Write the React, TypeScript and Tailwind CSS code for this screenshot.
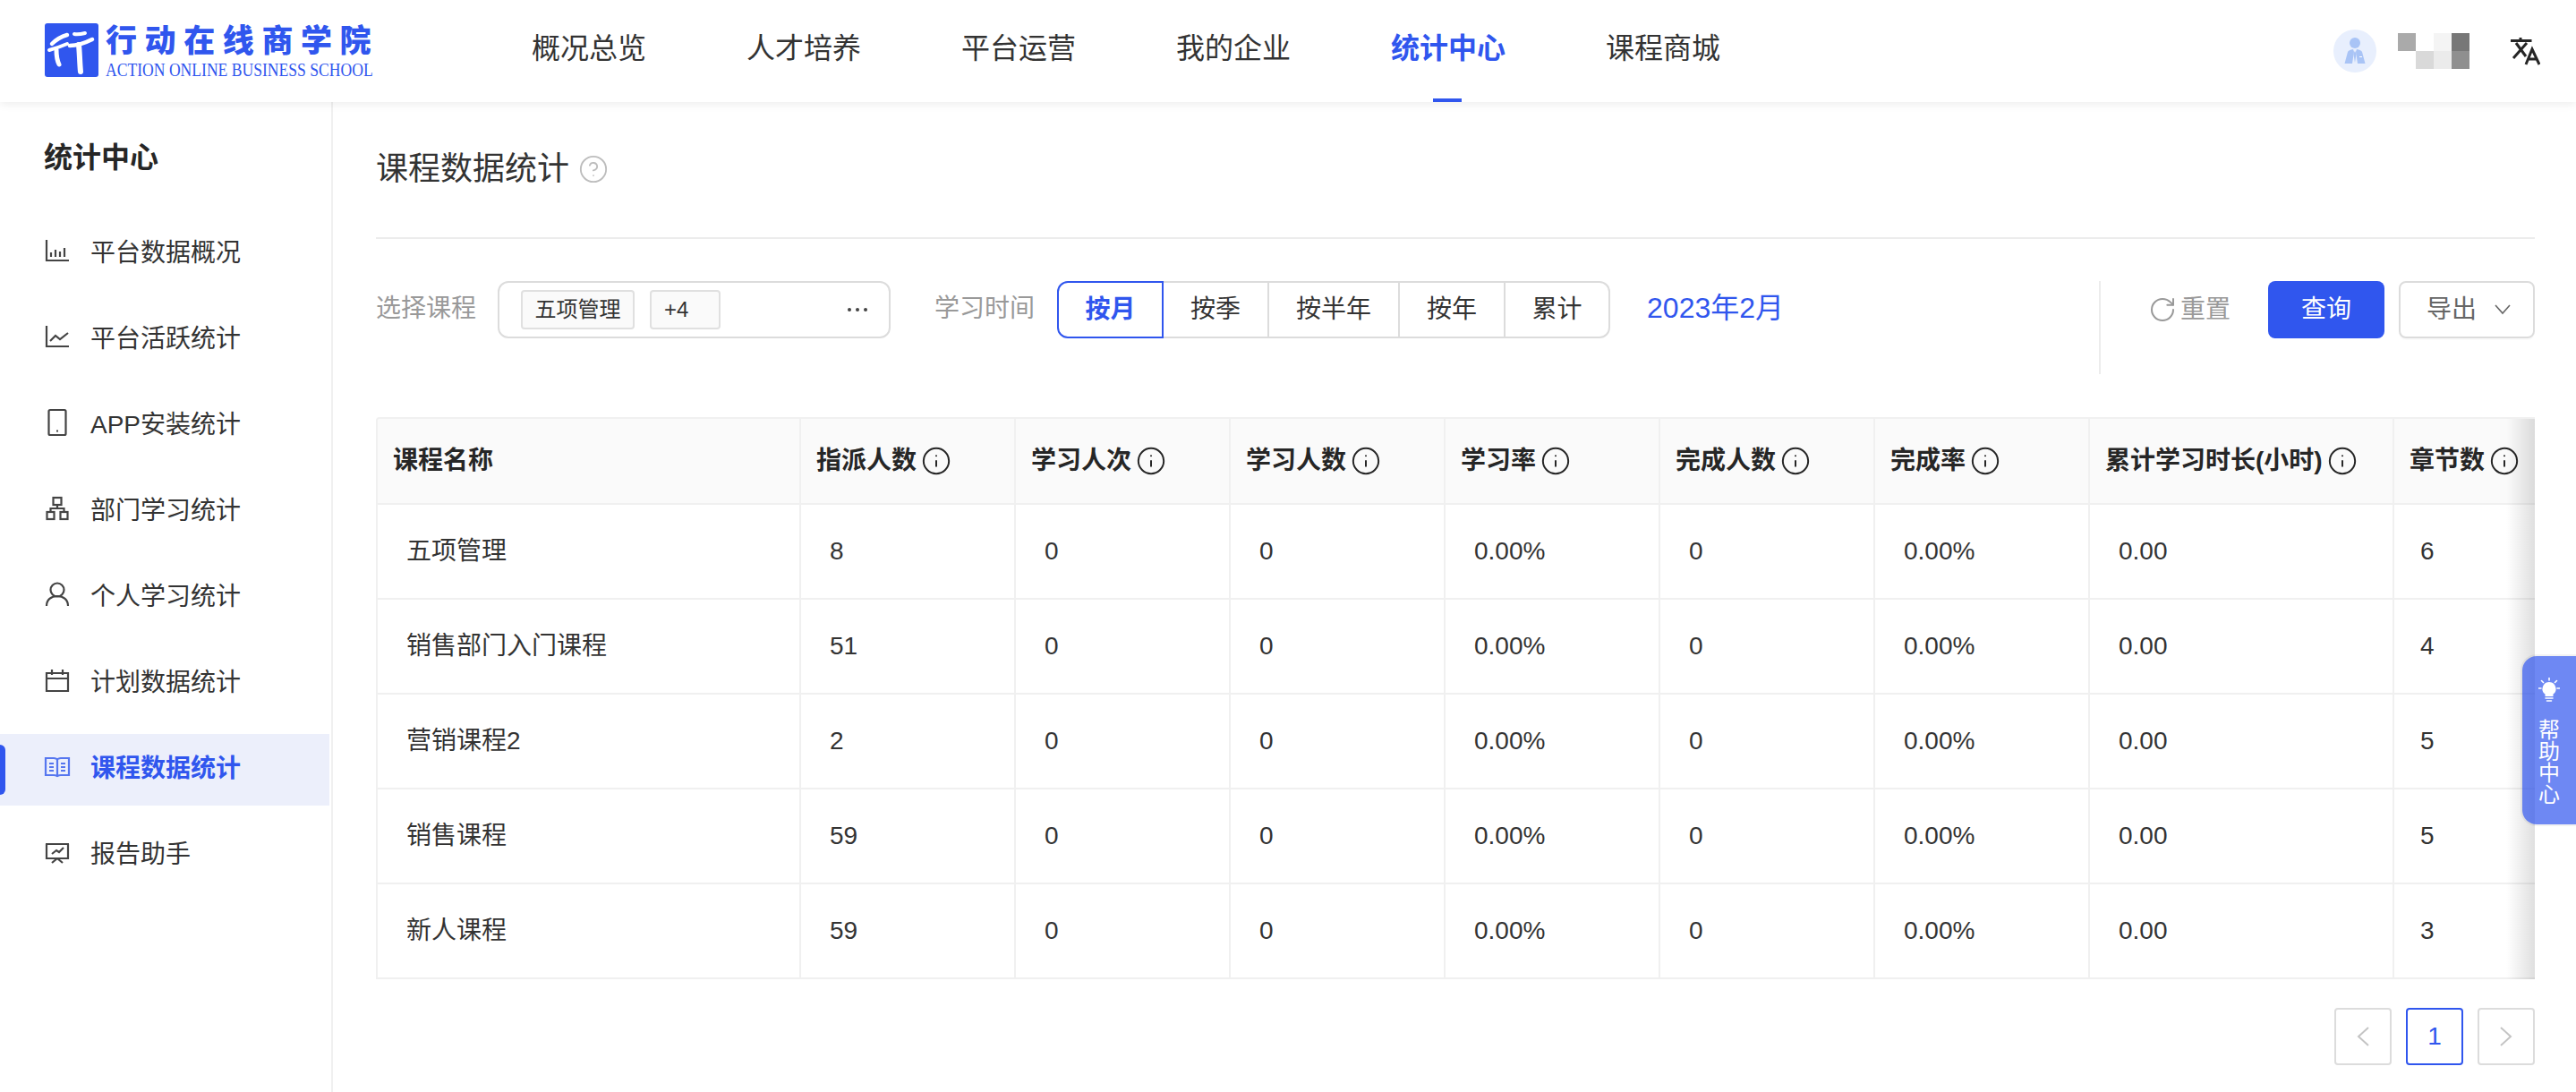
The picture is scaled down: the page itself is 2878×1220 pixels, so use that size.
import React from "react";
import { CircleHelp, Info, RotateCw } from "lucide-react";

const navItems = ["概况总览", "人才培养", "平台运营", "我的企业", "统计中心", "课程商城"];

const columns = ["指派人数", "学习人次", "学习人数", "学习率", "完成人数", "完成率", "累计学习时长(小时)", "章节数"];

const rows = [
  { name: "五项管理", assigned: "8", chapters: "6" },
  { name: "销售部门入门课程", assigned: "51", chapters: "4" },
  { name: "营销课程2", assigned: "2", chapters: "5" },
  { name: "销售课程", assigned: "59", chapters: "5" },
  { name: "新人课程", assigned: "59", chapters: "3" },
];

function MenuIcon({ children, blue }: { children: React.ReactNode; blue?: boolean }) {
  return (
    <svg
      viewBox="0 0 28 28"
      fill="none"
      stroke="currentColor"
      strokeWidth={2.2}
      className={`-mt-2 w-7 h-7 shrink-0 overflow-visible ${blue ? "text-[#5676ef]" : "text-[#444]"}`}
    >
      {children}
    </svg>
  );
}

const menu: { label: string; icon: React.ReactNode; active?: boolean }[] = [
  {
    label: "平台数据概况",
    icon: <path d="M2 2v23h25M7 21v-5M12 21v-8M17 21v-6M22 21v-10" />,
  },
  {
    label: "平台活跃统计",
    icon: <path d="M2 2v23h25M6 19l6-6 5 4 9-7" />,
  },
  {
    label: "APP安装统计",
    icon: (
      <>
        <rect x="4.5" y="0" width="19" height="28" rx="1.5" />
        <path d="M13 23.5h2" />
      </>
    ),
  },
  {
    label: "部门学习统计",
    icon: (
      <>
        <rect x="9.5" y="2" width="9" height="8" />
        <rect x="2.5" y="18" width="8" height="8" />
        <rect x="17.5" y="18" width="8" height="8" />
        <path d="M14 10v4M6.5 18v-4h15v4" />
      </>
    ),
  },
  {
    label: "个人学习统计",
    icon: (
      <>
        <circle cx="14" cy="9" r="7.5" />
        <path d="M2 27c0-7 5-11 12-11s12 4 12 11" />
      </>
    ),
  },
  {
    label: "计划数据统计",
    icon: <path d="M2 6h24v20H2zM8 2v6M20 2v6M2 12h24" />,
  },
  {
    label: "课程数据统计",
    active: true,
    icon: (
      <path d="M1 5h9c2 0 4 1 4 2 0-1 2-2 4-2h9v19h-9c-2 0-4 1-4 1 0 0-2-1-4-1H1zM14 7v18M5 11h5M5 15h5M5 19h5M18 11h5M18 15h5M18 19h5" />
    ),
  },
  {
    label: "报告助手",
    icon: <path d="M1 5h26M2 5v16h24V5M8 16l5-4 3 2 5-5M14 21l-6 5M14 21l6 5" />,
  },
];

function Logo() {
  return (
    <div className="flex w-[366px] items-start gap-2">
      <svg viewBox="0 0 60 60" className="w-[60px] h-[60px] shrink-0">
        <rect width="60" height="60" rx="3" fill="#3056ee" />
        <g fill="none" stroke="#fff" strokeLinecap="round">
          <path d="M8 23c5-5 10-8 17-10" strokeWidth="4.5" />
          <path d="M5 30c7-2 13-4 20-7" strokeWidth="4" />
          <path d="M13 30c0 6 1 12 3 16" strokeWidth="5" />
          <path d="M33 12c4 1 8 0 12-1" strokeWidth="4" />
          <path d="M28 25c9 0 17-3 25-7" strokeWidth="4.5" />
          <path d="M38 24c1 10 1 20 2 30" strokeWidth="6" />
        </g>
      </svg>
      <div className="flex flex-col pt-[2px]">
        <span className="text-[35px] leading-[36px] font-black tracking-[8.6px] text-[#3056ee] whitespace-nowrap">
          行动在线商学院
        </span>
        <span className="mt-[4px] origin-left scale-x-[0.88] font-['Liberation_Serif',serif] text-[20px] leading-[20px] text-[#3056ee] whitespace-nowrap">
          ACTION ONLINE BUSINESS SCHOOL
        </span>
      </div>
    </div>
  );
}

function Header() {
  return (
    <header className="relative z-10 flex h-[114px] items-center bg-white pl-[50px] pr-[40px] shadow-[0_2px_10px_rgba(0,0,0,0.08)]">
      <Logo />
      <nav className="ml-[178px] flex h-full items-center gap-[112px]">
        {navItems.map((item) => {
          const active = item === "统计中心";
          return (
            <div
              key={item}
              className={`relative flex h-full items-center pb-[6px] text-[32px] ${active ? "font-bold text-[#3056ee]" : "text-[#333]"}`}
            >
              {item}
              {active && <span className="absolute bottom-0 left-[47px] h-1 w-8 bg-[#3056ee]" />}
            </div>
          );
        })}
      </nav>
      <div className="ml-auto flex items-center">
        <svg viewBox="0 0 48 48" className="w-12 h-12">
          <circle cx="24" cy="24" r="24" fill="#e8effd" />
          <circle cx="24" cy="15" r="6" fill="#a9c4f6" />
          <path d="M12.5 38L16 25q1-2 6-3l1 3-2 13zM35.5 38L32 25q-1-2-6-3l-1 3 2 13z" fill="#a9c4f6" />
          <path d="M24 24l1.6 3-1.6 10-1.6-10z" fill="#a9c4f6" />
          <path d="M29 30.5h3" stroke="#fff" strokeWidth="1" />
        </svg>
        <div className="ml-6 grid grid-cols-4 w-20">
          <div className="h-5 bg-[#aaaaaa]" />
          <div className="h-5" />
          <div className="h-5 bg-[#f4f4f4]" />
          <div className="h-5 bg-[#777777]" />
          <div className="h-5" />
          <div className="h-5 bg-[#d9d9d9]" />
          <div className="h-5 bg-[#ebebeb]" />
          <div className="h-5 bg-[#8f8f8f]" />
        </div>
        <svg viewBox="0 0 34 32" fill="none" stroke="#262626" strokeWidth="3" className="ml-[45px] w-[34px] h-8">
          <path d="M1 4.5h23.5M12 1v3.5M7 7l11 15M19 7L4 24M18 31l7-17 8 17M21 25h9" />
        </svg>
      </div>
    </header>
  );
}

function Sidebar() {
  return (
    <aside className="w-[372px] shrink-0 border-r-2 border-[#f0f0f0] pt-10">
      <h2 className="pl-[49px] text-[32px] leading-[44px] font-bold text-[#262626]">统计中心</h2>
      <ul className="mt-[46px] flex w-[368px] flex-col gap-4">
        {menu.map((m) => (
          <li
            key={m.label}
            className={`relative flex h-20 items-center gap-[23px] pl-[50px] text-[28px] ${
              m.active ? "bg-[#eceffb] font-bold text-[#3056ee]" : "text-[#333]"
            }`}
          >
            {m.active && <span className="absolute left-0 top-3 h-14 w-[6px] rounded-r-full bg-[#3056ee]" />}
            <MenuIcon blue={m.active}>{m.icon}</MenuIcon>
            <span className="-mt-[2px]">{m.label}</span>
          </li>
        ))}
      </ul>
    </aside>
  );
}

function Filters() {
  return (
    <div className="mb-12 mt-[47px] flex h-[104px] items-start text-[28px]">
      <span className="h-16 leading-[62px] text-[#999]">选择课程</span>
      <div className="ml-6 flex h-16 w-[439px] items-center gap-[17px] rounded-xl border-2 border-[#dcdcdc] pl-6 pr-6 text-[24px] text-[#333]">
        <span className="flex h-11 w-[127px] items-center justify-center rounded border-2 border-[#e0e0e0] bg-[#fafafa]">
          五项管理
        </span>
        <span className="flex h-11 w-[79px] items-center rounded border-2 border-[#e0e0e0] bg-[#fafafa] pl-[14px]">
          +4
        </span>
        <span className="ml-auto flex gap-[5px]">
          <i className="h-[4px] w-[4px] rounded-full bg-[#444]" />
          <i className="h-[4px] w-[4px] rounded-full bg-[#444]" />
          <i className="h-[4px] w-[4px] rounded-full bg-[#444]" />
        </span>
      </div>
      <span className="ml-[49px] h-16 leading-[62px] text-[#999]">学习时间</span>
      <div className="ml-[25px] flex h-16 text-[#333]">
        <span className="flex w-[119px] items-center justify-center rounded-l-xl border-2 border-[#3056ee] font-bold text-[#3056ee]">
          按月
        </span>
        <span className="flex w-[118px] items-center justify-center border-y-2 border-r-2 border-[#dcdcdc]">按季</span>
        <span className="flex w-[146px] items-center justify-center border-y-2 border-r-2 border-[#dcdcdc]">按半年</span>
        <span className="flex w-[118px] items-center justify-center border-y-2 border-r-2 border-[#dcdcdc]">按年</span>
        <span className="flex w-[117px] items-center justify-center rounded-r-xl border-y-2 border-r-2 border-[#dcdcdc]">累计</span>
      </div>
      <span className="ml-[41px] h-16 text-[32px] leading-[60px] text-[#3056ee]">2023年2月</span>
      <div className="ml-auto flex h-full">
        <div className="h-full w-[2px] bg-[#ececec]" />
        <div className="ml-[53px] flex h-16 items-center text-[#999]">
          <RotateCw size={32} strokeWidth={1.5} className="text-[#999]" />
          <span className="ml-1">重置</span>
        </div>
        <button className="ml-[42px] h-16 w-[130px] rounded-lg bg-[#3056ee] text-white">查询</button>
        <button className="ml-4 flex h-16 w-[152px] items-center rounded-lg border-2 border-[#dcdcdc] pl-[29px] text-[#666] shadow-[0_2px_0_rgba(0,0,0,0.02)]">
          导出
          <svg viewBox="0 0 18 12" fill="none" stroke="#666" strokeWidth="1.6" className="ml-5 w-[18px] h-3">
            <path d="M1 1l8 9 8-9" />
          </svg>
        </button>
      </div>
    </div>
  );
}

function CourseTable() {
  return (
    <div className="relative h-[628px] w-[2412px] overflow-hidden rounded-tl border-l-2 border-t-2 border-[#f0f0f0]">
      <table className="w-[2415px] table-fixed border-separate border-spacing-0 text-[28px]">
        <colgroup>
          <col className="w-[473px]" />
          <col className="w-[240px]" />
          <col className="w-[240px]" />
          <col className="w-[240px]" />
          <col className="w-[240px]" />
          <col className="w-[240px]" />
          <col className="w-[240px]" />
          <col className="w-[340px]" />
          <col className="w-[162px]" />
        </colgroup>
        <thead>
          <tr className="bg-[#fafafa] text-[#262626]">
            <th className="h-[96px] border-b-2 border-r-2 border-[#f0f0f0] pl-[17px] text-left font-bold">课程名称</th>
            {columns.map((c) => (
              <th key={c} className="border-b-2 border-r-2 border-[#f0f0f0] pl-[17px] text-left font-bold">
                <span className="flex items-center gap-[5px] whitespace-nowrap">
                  {c}
                  <Info size={34} strokeWidth={1.4} className="shrink-0" />
                </span>
              </th>
            ))}
          </tr>
        </thead>
        <tbody className="text-[#333]">
          {rows.map((r) => (
            <tr key={r.name}>
              <td className="h-[106px] border-b-2 border-r-2 border-[#f0f0f0] pl-8">{r.name}</td>
              <td className="border-b-2 border-r-2 border-[#f0f0f0] pl-8">{r.assigned}</td>
              <td className="border-b-2 border-r-2 border-[#f0f0f0] pl-8">0</td>
              <td className="border-b-2 border-r-2 border-[#f0f0f0] pl-8">0</td>
              <td className="border-b-2 border-r-2 border-[#f0f0f0] pl-8">0.00%</td>
              <td className="border-b-2 border-r-2 border-[#f0f0f0] pl-8">0</td>
              <td className="border-b-2 border-r-2 border-[#f0f0f0] pl-8">0.00%</td>
              <td className="border-b-2 border-r-2 border-[#f0f0f0] pl-8">0.00</td>
              <td className="border-b-2 border-r-2 border-[#f0f0f0] pl-[29px]">{r.chapters}</td>
            </tr>
          ))}
        </tbody>
      </table>
      <div className="pointer-events-none absolute inset-y-0 right-0 w-8 bg-linear-to-l from-[#00000020] to-transparent" />
    </div>
  );
}

function Pagination() {
  return (
    <div className="mt-8 flex justify-end gap-4">
      <span className="flex h-16 w-16 items-center justify-center rounded border-2 border-[#dcdcdc]">
        <svg viewBox="0 0 14 22" fill="none" stroke="#c4c4c4" strokeWidth="2" className="w-[14px] h-[22px]">
          <path d="M13 1L2 11l11 10" />
        </svg>
      </span>
      <span className="flex h-16 w-16 items-center justify-center rounded border-2 border-[#3056ee] text-[28px] text-[#3056ee]">
        1
      </span>
      <span className="flex h-16 w-16 items-center justify-center rounded border-2 border-[#dcdcdc]">
        <svg viewBox="0 0 14 22" fill="none" stroke="#c4c4c4" strokeWidth="2" className="w-[14px] h-[22px]">
          <path d="M1 1l11 10L1 21" />
        </svg>
      </span>
    </div>
  );
}

function HelpTab() {
  return (
    <div className="absolute right-0 top-[733px] z-20 flex h-[188px] w-[60px] flex-col items-center rounded-l-2xl bg-[#3056ee]/70 pt-6 text-white shadow-[0_0_0_2px_rgba(0,0,0,0.05)]">
      <svg viewBox="0 0 24 27" className="w-6 h-[27px]">
        <g stroke="#fff" strokeWidth="1.6" strokeLinecap="round">
          <path d="M12 0v3M3.5 3.5l2 2M20.5 3.5l-2 2M0 12h3M21 12h3M8 23h8M9.5 26h5" />
        </g>
        <path d="M12 5a7.5 7.5 0 0 1 4.5 13.5V21h-9v-2.500A7.500 7.500 0 0 1 12 5z" fill="#fff" />
      </svg>
      <span className="mt-5 w-6 break-all text-[24px] leading-[24px]">帮助中心</span>
    </div>
  );
}

export default function App() {
  return (
    <div className="relative flex h-[1220px] w-[2878px] flex-col overflow-hidden bg-white font-['Liberation_Sans','Noto_Sans_CJK_SC',sans-serif]">
      <Header />
      <div className="flex min-h-0 flex-1">
        <Sidebar />
        <main className="w-[2460px] pl-[48px]">
          <div className="flex h-[153px] w-[2412px] items-start border-b-2 border-[#ececec] pt-[51px]">
            <h1 className="text-[36px] leading-[48px] text-[#333]">课程数据统计</h1>
            <CircleHelp size={34} strokeWidth={1.3} className="ml-[10px] mt-[7px] text-[#bdbdbd]" />
          </div>
          <div className="w-[2412px]">
            <Filters />
            <CourseTable />
            <Pagination />
          </div>
        </main>
      </div>
      <HelpTab />
    </div>
  );
}
